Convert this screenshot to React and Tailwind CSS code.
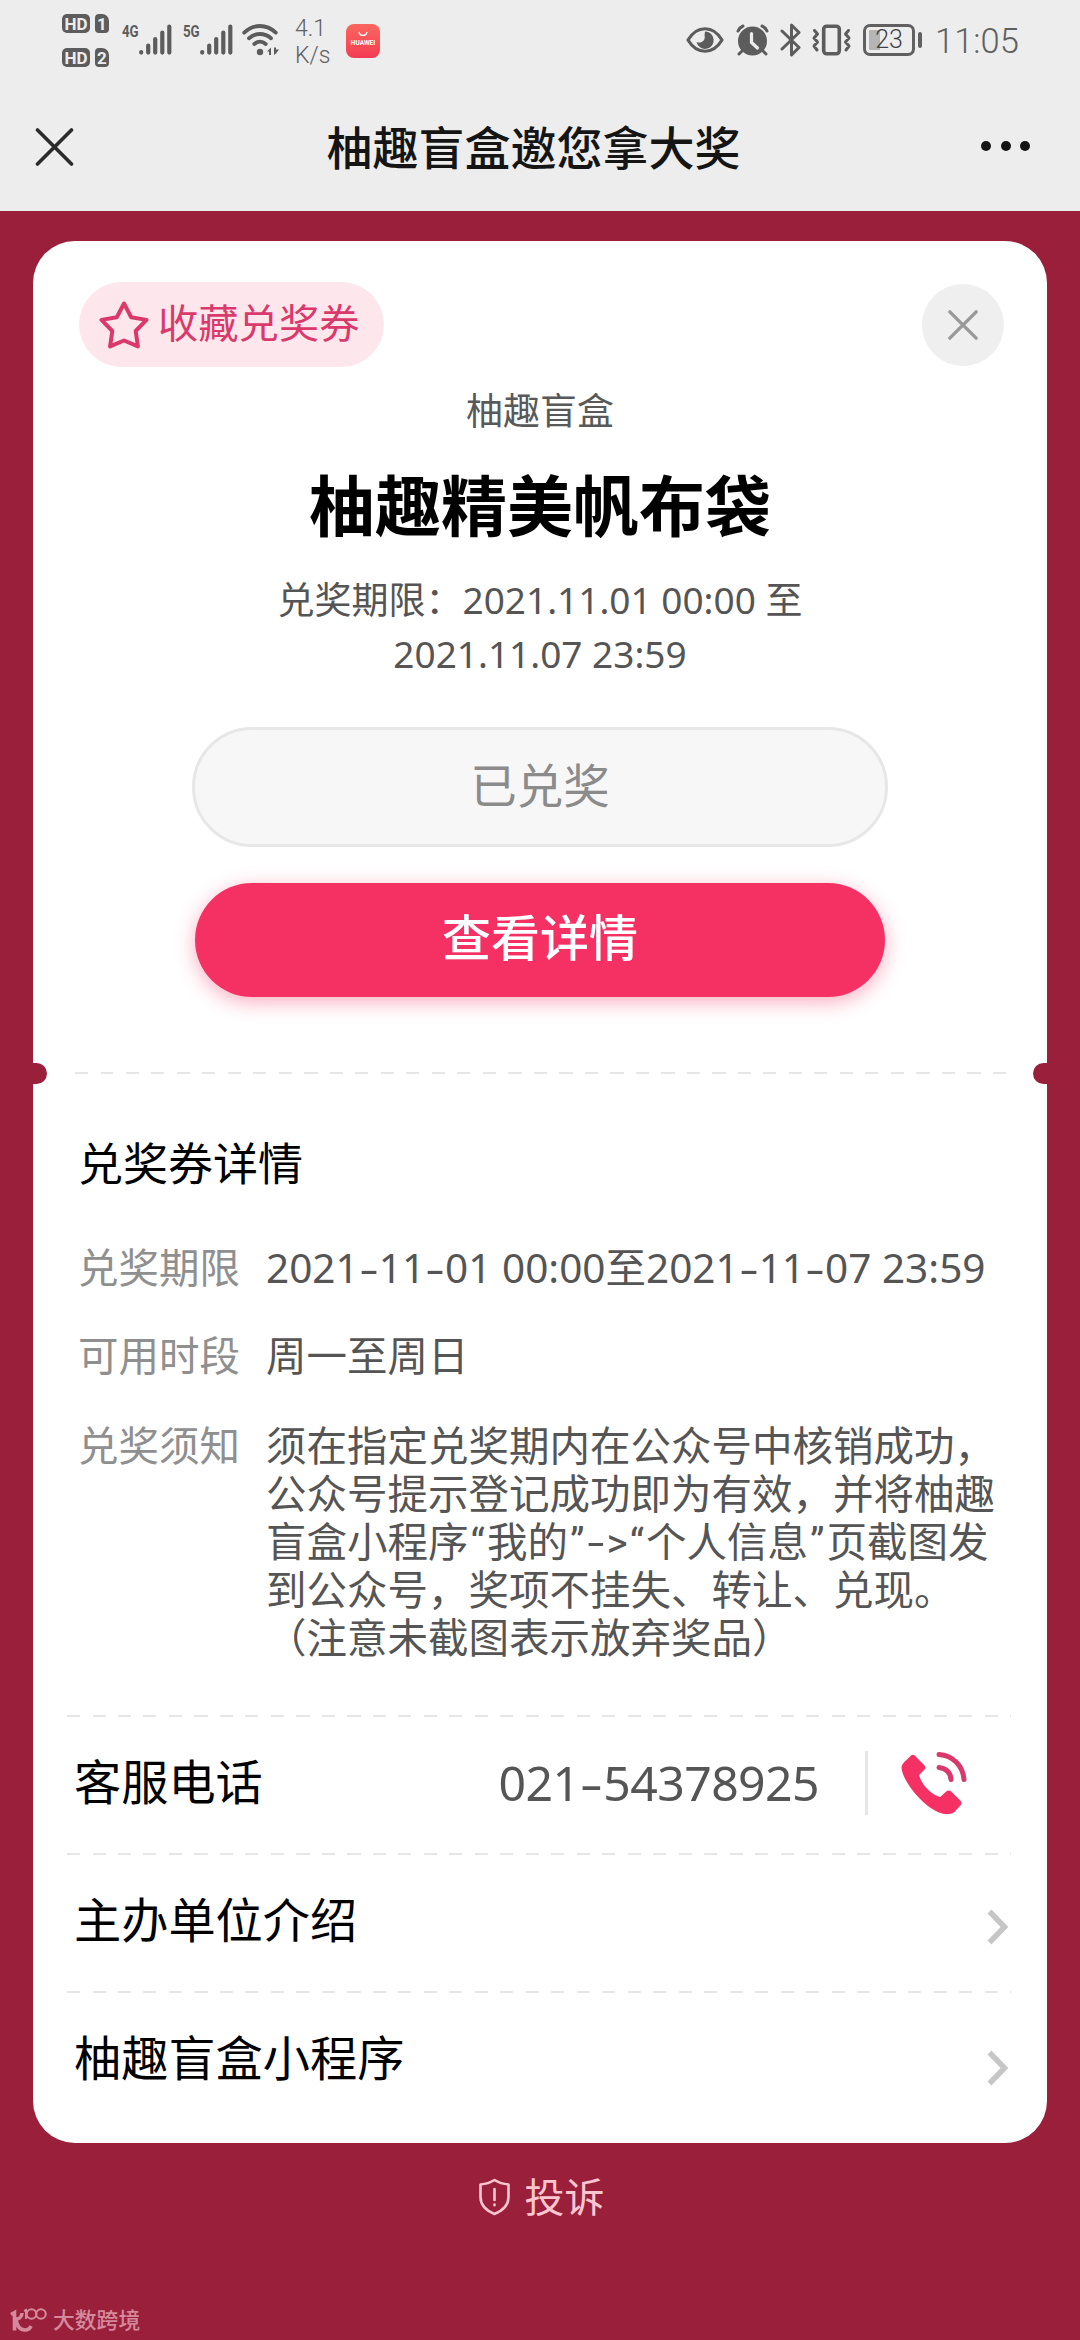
import React from "react";

const details = [
  { label: "兑奖期限", lines: ["2021-11-01 00:00至2021-11-07 23:59"] },
  { label: "可用时段", lines: ["周一至周日"] },
];

const notice = [
  "须在指定兑奖期内在公众号中核销成功，",
  "公众号提示登记成功即为有效，并将柚趣",
  "盲盒小程序“我的”->“个人信息”页截图发",
  "到公众号，奖项不挂失、转让、兑现。",
  "（注意未截图表示放弃奖品）",
];

// Dashes and quotes are set wider than the font's own
function Spaced({ text }) {
  return text.split(/([-“”])/).map((part, i) => {
    if (part === "-") {
      return <span key={i} className="inline-block w-[0.495em] scale-x-150 text-center">-</span>;
    }
    if (part === "“" || part === "”") {
      return <span key={i} className="inline-block w-[0.455em] text-center">{part}</span>;
    }
    return part;
  });
}

function DashedLine({ className = "" }) {
  return (
    <div
      className={`h-[2px] shrink-0 bg-[repeating-linear-gradient(90deg,#e6e6e6_0_13px,transparent_13px_25.5px)] ${className}`}
    />
  );
}

function HdBadge({ sim }) {
  return (
    <div className="flex h-[19px] gap-[5px] font-['Roboto',sans-serif] text-[17px] leading-[20px] font-bold text-[#ededed]">
      <span className="w-[28px] rounded-[5px] bg-[#5c5c5c] text-center">HD</span>
      <span className="w-[14px] rounded-[4px] rounded-tr-[7px] bg-[#5c5c5c] text-center">{sim}</span>
    </div>
  );
}

function Signal({ label }) {
  return (
    <div className="flex h-[31px] items-start">
      <span className="w-[17px] origin-left scale-x-[0.78] font-['Roboto',sans-serif] text-[17px] leading-[15px] font-bold text-[#5c5c5c]">
        {label}
      </span>
      <svg width="33" height="31" viewBox="0 0 33 31" stroke="#5c5c5c" strokeWidth="4.2" strokeLinecap="round">
        <path d="M2.2 28v.6M9.2 21.5v7.1M16.2 15v13.6M23.3 8.5v20.1M30.3 2.5v26.1" />
      </svg>
    </div>
  );
}

function StatusBar() {
  return (
    <div className="flex h-[80px] items-start text-[#606060]">
      <div className="mt-[14px] ml-[62px] flex w-[60px] flex-col gap-[15px]">
        <HdBadge sim="1" />
        <HdBadge sim="2" />
      </div>
      <div className="mt-[24px] flex gap-[11px]">
        <Signal label="4G" />
        <Signal label="5G" />
      </div>
      <svg className="mt-[24px] ml-[9px]" width="38" height="32" viewBox="0 0 38 32" fill="none" stroke="#5c5c5c" strokeWidth="3.8" strokeLinecap="round">
        <path d="M2.2 8.6C11.5 -0.2 24.5 -0.2 33.8 8.6" />
        <path d="M7 14.2c6.5-5.6 15.5-5.6 22 0" />
        <path d="M12.3 20c3.5-3 8-3 11.4 0" />
        <circle cx="18" cy="28" r="3.2" fill="#5c5c5c" stroke="none" />
        <path d="M25 27.5l4-4v7.500h-2v-3.500zM32 31v-7.500h2v2l3 0-3 4z" fill="#5c5c5c" stroke="none" />
      </svg>
      <div className="mt-[15px] ml-[15px] w-[51px] font-['Roboto',sans-serif] text-[23px] leading-[27px] font-light">
        <p>4.1</p>
        <p>K/s</p>
      </div>
      <div className="mt-[24px] flex h-[34px] w-[34px] flex-col items-center rounded-[8px] bg-linear-to-b from-[#fb665f] to-[#f33a53] text-white">
        <svg className="mt-[7px]" width="10" height="6" viewBox="0 0 10 6" fill="none" stroke="currentColor" strokeWidth="1.3">
          <path d="M1 1c1 4.500 7 4.500 8 0" />
        </svg>
        <span className="font-['Roboto',sans-serif] text-[6.5px] leading-[12px] font-bold">HUAWEI</span>
      </div>

      <div className="mt-[23px] mr-[61px] ml-auto flex h-[34px] items-center">
        <svg width="38" height="28" viewBox="0 0 38 28" fill="none">
          <path d="M2 14C11-1 27-1 36 14 27 29 11 29 2 14z" stroke="#5c5c5c" strokeWidth="3.2" strokeLinejoin="round" />
          <path d="M19 5.500a8.700 8.700 0 1 1-8.500 10.500c5 2 9.500-2 8-6.500z" fill="#5c5c5c" />
        </svg>
        <svg className="ml-[12px]" width="33" height="32" viewBox="0 0 33 32" fill="none" stroke="#5c5c5c" strokeLinecap="round">
          <circle cx="16.500" cy="17" r="14.500" fill="#5c5c5c" stroke="none" />
          <path d="M2 7q1.500-3.500 5-5M31 7q-1.500-3.500-5-5M6 27l-3 3M27 27l3 3" strokeWidth="3" />
          <path d="M15.500 9.500v9l6 5.500" stroke="#ededed" strokeWidth="3.2" />
        </svg>
        <svg className="ml-[11px]" width="21" height="34" viewBox="0 0 21 34" fill="none" stroke="#5c5c5c" strokeWidth="3" strokeLinejoin="round" strokeLinecap="round">
          <path d="M2 8l17 16.500-7.500 7.500V2L19 9.500 2 26" />
        </svg>
        <svg className="ml-[11px]" width="39" height="32" viewBox="0 0 39 32" fill="none" stroke="#5c5c5c" strokeLinejoin="round" strokeLinecap="round">
          <rect x="11.700" y="2.200" width="15.600" height="27.600" rx="3" strokeWidth="3.6" />
          <path d="M2.500 6.500l3 3.500-3.500 4 3.500 4-3.500 4 3 4M36.500 6.500l-3 3.500 3.500 4-3.500 4 3.500 4-3 4" strokeWidth="3" />
        </svg>
        <div className="ml-[12px] flex h-[32px] w-[52px] items-center rounded-[7px] border-[3px] border-[#606060] bg-linear-to-r from-[#b5b5b5] from-30% to-transparent to-30% bg-clip-content p-[3px]">
          <span className="w-full text-center font-['Roboto',sans-serif] text-[25px] leading-[26px] font-light text-[#444]">23</span>
        </div>
        <span className="ml-[3px] h-[16px] w-[4px] rounded-[2px] bg-[#606060]" />
        <span className="ml-[13px] w-[84px] pt-[2px] font-['Roboto',sans-serif] text-[34.5px] leading-[34px] font-light whitespace-nowrap">11:05</span>
      </div>
    </div>
  );
}

function NavBar() {
  return (
    <div className="flex h-[131px] items-start justify-between pt-[35px] pr-[50px] pl-[35px] text-[#151515]">
      <svg className="mt-[12px]" width="40" height="40" viewBox="0 0 40 40" stroke="#2b2b2b" strokeWidth="3.6" strokeLinecap="round">
        <path d="M2.500 3l34 34M36.500 3l-34 34" />
      </svg>
      <h1 className="mr-[-11px] text-[46px] leading-[64px] font-medium">柚趣盲盒邀您拿大奖</h1>
      <div className="mt-[26px] flex gap-[9.5px]">
        <span className="h-[10px] w-[10px] rounded-full bg-[#151515]" />
        <span className="h-[10px] w-[10px] rounded-full bg-[#151515]" />
        <span className="h-[10px] w-[10px] rounded-full bg-[#151515]" />
      </div>
    </div>
  );
}

function Chevron() {
  return (
    <svg width="22" height="36" viewBox="0 0 22 36" fill="none" stroke="#c6c6c6" strokeWidth="5.5">
      <path d="M2.500 2.500L17.500 18 2.500 33.500" />
    </svg>
  );
}

function App() {
  return (
    <div
      lang="zh-CN"
      className="flex h-[2340px] w-[1080px] flex-col overflow-hidden bg-[#9a1f3b] font-['Noto_Sans','Noto_Sans_CJK_SC',sans-serif]"
    >
      <header className="h-[211px] shrink-0 bg-[#ededed]">
        <StatusBar />
        <NavBar />
      </header>

      <main className="relative mt-[30px] ml-[33px] flex h-[1902px] w-[1014px] shrink-0 flex-col rounded-[42px] bg-white">
        {/* Prize */}
        <section className="flex h-[831px] shrink-0 flex-col items-center pt-[41px]">
          <div className="flex w-full items-center justify-between pr-[43px] pl-[46px]">
            <button className="flex h-[85px] w-[305px] items-center rounded-full bg-[#fee7ec] pl-[20px] text-[40.3px] leading-[60px] text-[#d93a6b]">
              <svg className="mr-[9px]" width="50" height="50" viewBox="0 0 50 50" fill="none" stroke="currentColor" strokeWidth="4" strokeLinejoin="round">
                <path d="M25 3.500l7.200 13.700 15.300 2.700-10.800 11.100 2.200 15.400L25 40.500 11.100 46.400l2.200-15.400L2.500 19.900l15.300-2.700z" />
              </svg>
              <span className="pb-[3px]">收藏兑奖券</span>
            </button>
            <button className="flex h-[82px] w-[82px] items-center justify-center rounded-full bg-[#efefef]">
              <svg width="32" height="34" viewBox="0 0 34 34" stroke="#999" strokeWidth="3.6" strokeLinecap="round">
                <path d="M3 3l28 28M31 3L3 31" />
              </svg>
            </button>
          </div>
          <p className="mt-[17px] text-[37px] leading-[54px] text-[#595959]">柚趣盲盒</p>
          <h2 className="mt-[27px] text-[66px] leading-[80px] font-bold text-black">柚趣精美帆布袋</h2>
          <p className="mt-[28px] h-[109px] text-center text-[37px] leading-[53.5px] text-[#555]">
            兑奖期限：2021.11.01 00:00 至<br />
            2021.11.07 23:59
          </p>
          <button className="mt-[45px] h-[120px] w-[696px] rounded-full border-[3px] border-[#e7e7e7] bg-[#f7f7f7] text-[46.5px] text-[#8b8b8b]">
            <span className="block pb-[3px]">已兑奖</span>
          </button>
          <button className="mt-[36px] h-[114px] w-[690px] rounded-full bg-[#f53163] text-[49px] font-medium text-white shadow-[0_5px_20px_rgba(245,49,99,0.4)]">
            <span className="block pb-[4px]">查看详情</span>
          </button>
        </section>

        {/* Tear line with the two notches */}
        <DashedLine className="mr-[36px] ml-[42px]" />
        <span className="absolute top-[822px] left-[-8px] h-[21px] w-[22px] rounded-r-full bg-[#9a1f3b]" />
        <span className="absolute top-[822px] right-[-8px] h-[21px] w-[22px] rounded-l-full bg-[#9a1f3b]" />

        {/* Coupon details */}
        <section className="pt-[60px] pl-[45px]">
          <h3 className="text-[45px] leading-[60px] text-black">兑奖券详情</h3>
          <dl className="mt-[50px] flex flex-col gap-[40px] text-[40.5px] leading-[48px] text-[#555]">
            {details.map((item) => (
              <div key={item.label} className="flex">
                <dt className="w-[188px] shrink-0 text-[#8f8f8f]">{item.label}</dt>
                <dd className="whitespace-nowrap">
                  <p className="h-[48px]"><Spaced text={item.lines[0]} /></p>
                </dd>
              </div>
            ))}
            <div className="flex h-[240px] pt-[3px] font-['Roboto','Noto_Sans_CJK_SC',sans-serif]">
              <dt className="w-[188px] shrink-0 text-[#8f8f8f]">兑奖须知</dt>
              <dd>
                {notice.map((line) => (
                  <p key={line} className="h-[48px] whitespace-nowrap">
                    <Spaced text={line} />
                  </p>
                ))}
              </dd>
            </div>
          </dl>
        </section>

        <DashedLine className="mt-[55px] mr-[36px] ml-[34px]" />
        <div className="flex h-[136px] items-center pb-[5px] pl-[41px] text-[47.2px] text-black">
          <span>客服电话</span>
          <span className="ml-auto text-[48.2px] tracking-[-0.6px] text-[#555]">
            <Spaced text="021-54378925" />
          </span>
          <span className="ml-[46px] h-[64px] w-[3px] bg-[#e6e6e6]" />
          <svg className="mr-[80px] ml-[33px]" width="66" height="66" viewBox="0 0 66 66" fill="none">
            <path
              d="M6 9.500l4-4q2-1.500 4 .2l9.500 9.800q1.700 2 0 4l-5.300 5.500c1.500 9 12.500 20 21 22l6.300-5.800q2.500-1.500 4.700.2l9.300 9.300q1.800 2 .3 4.300l-6.300 7C48 66 38 64.500 27 56 13 45 .5 27 .5 17q.5-3.500 5.500-7.500z"
              fill="#f53163"
            />
            <path d="M38 4.500c14 1 24 11.500 25 25M38 17.500c7 1 11.500 5 12 12" stroke="#d93a6b" strokeWidth="5" strokeLinecap="round" />
          </svg>
        </div>
        <DashedLine className="mr-[36px] ml-[34px]" />
        <div className="flex h-[136px] items-center justify-between pr-[38px] pl-[41px] text-[47.2px] text-black">
          <span className="pb-[6px]">主办单位介绍</span>
          <span className="pt-[8px]"><Chevron /></span>
        </div>
        <DashedLine className="mr-[36px] ml-[34px]" />
        <div className="flex h-[136px] items-center justify-between pr-[38px] pl-[41px] text-[47.2px] text-black">
          <span className="pb-[6px]">柚趣盲盒小程序</span>
          <span className="pt-[14px]"><Chevron /></span>
        </div>
      </main>

      <footer className="flex grow flex-col">
        <div className="mt-[30px] flex h-[48px] items-center justify-center pl-[2px] text-[40px] text-[#fbc6d0]">
          <svg className="mr-[14px]" width="33" height="38" viewBox="0 0 33 38" fill="none" stroke="currentColor" strokeWidth="2.6" strokeLinejoin="round" strokeLinecap="round">
            <path d="M16.500 2c4 2.500 8.500 4 14 4.500v12.500c0 8-5.500 13.500-14 17-8.500-3.500-14-9-14-17V6.500c5.500-.5 10-2 14-4.500z" />
            <path d="M16.500 11v11M16.500 26.500v.8" />
          </svg>
          <span>投诉</span>
        </div>
        <div className="mt-auto mb-[6px] ml-[10px] flex h-[28px] items-center text-[21.8px] font-medium text-[#d48a9c]">
          <svg className="mr-[5px]" width="38" height="26" viewBox="0 0 38 26" fill="none" stroke="currentColor">
            <path d="M1 7.500l3.500-2v18M12 6c0 4-3 6-6 6 1 7 4 11 9 11 3 0 5-1.500 6-4" strokeWidth="3.6" />
            <path d="M14 4l2-1v9" strokeWidth="2" />
            <circle cx="21.500" cy="7" r="4.800" strokeWidth="2" />
            <circle cx="31" cy="7" r="4.800" strokeWidth="2" />
          </svg>
          <span>大数跨境</span>
        </div>
      </footer>
    </div>
  );
}

export default App;
